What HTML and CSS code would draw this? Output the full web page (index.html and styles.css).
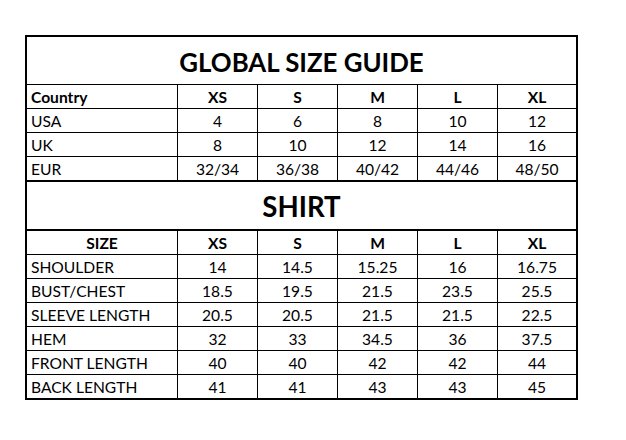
FILE: index.html
```html
<!DOCTYPE html>
<html lang="en">
<head>
<meta charset="utf-8">
<title>Global Size Guide</title>
<link rel="stylesheet" href="styles.css">
</head>
<body>
<table class="guide">
  <colgroup>
    <col class="c-label"><col class="c-size"><col class="c-size"><col class="c-size"><col class="c-size"><col class="c-last">
  </colgroup>
  <tr class="title-row"><th colspan="6" class="title">GLOBAL SIZE GUIDE</th></tr>
  <tr class="head-row"><th class="label">Country</th><th>XS</th><th>S</th><th>M</th><th>L</th><th>XL</th></tr>
  <tr><td class="label">USA</td><td>4</td><td>6</td><td>8</td><td>10</td><td>12</td></tr>
  <tr><td class="label">UK</td><td>8</td><td>10</td><td>12</td><td>14</td><td>16</td></tr>
  <tr class="section-end"><td class="label">EUR</td><td>32/34</td><td>36/38</td><td>40/42</td><td>44/46</td><td>48/50</td></tr>
  <tr class="title-row title-row--shirt"><th colspan="6" class="title title--shirt">SHIRT</th></tr>
  <tr class="head-row"><th class="label label--center">SIZE</th><th>XS</th><th>S</th><th>M</th><th>L</th><th>XL</th></tr>
  <tr><td class="label">SHOULDER</td><td>14</td><td>14.5</td><td>15.25</td><td>16</td><td>16.75</td></tr>
  <tr><td class="label">BUST/CHEST</td><td>18.5</td><td>19.5</td><td>21.5</td><td>23.5</td><td>25.5</td></tr>
  <tr><td class="label">SLEEVE LENGTH</td><td>20.5</td><td>20.5</td><td>21.5</td><td>21.5</td><td>22.5</td></tr>
  <tr><td class="label">HEM</td><td>32</td><td>33</td><td>34.5</td><td>36</td><td>37.5</td></tr>
  <tr><td class="label">FRONT LENGTH</td><td>40</td><td>40</td><td>42</td><td>42</td><td>44</td></tr>
  <tr class="last-row"><td class="label">BACK LENGTH</td><td>41</td><td>41</td><td>43</td><td>43</td><td>45</td></tr>
</table>
</body>
</html>
```

FILE: styles.css
```css
html, body {
  margin: 0;
  padding: 0;
  background: #ffffff;
}

body {
  padding: 35px 0 0 25px;
  font-family: "Lato", "Liberation Sans", sans-serif;
  color: #000000;
}

.guide {
  border-collapse: separate;
  border-spacing: 0;
  table-layout: fixed;
  width: 553px;
  border: 2px solid #000000;
}

.c-label { width: 151px; }
.c-size { width: 80px; }
.c-last { width: 78px; }

.guide th,
.guide td {
  box-sizing: border-box;
  padding: 0 0 1px 0;
  height: 24px;
  border-right: 1px solid #000000;
  border-bottom: 1px solid #000000;
  font-size: 15.6px;
  line-height: 20px;
  text-align: center;
  vertical-align: bottom;
  white-space: nowrap;
  overflow: hidden;
}

.guide th {
  font-weight: 700;
}

.guide td {
  font-weight: 400;
}

.guide tr > :last-child {
  border-right: none;
}

.guide .label {
  text-align: left;
  padding-left: 4px;
}

.guide .label--center {
  text-align: center;
  padding-left: 0;
}

.guide .title {
  height: 48px;
  font-size: 25.8px;
  line-height: 32px;
  vertical-align: middle;
  padding: 2px 0 0 0;
}

.guide .title--shirt {
  height: 49px;
  font-size: 27.6px;
  border-bottom-width: 2px;
}

.guide .section-end > * {
  height: 25px;
  border-bottom-width: 2px;
}

.guide .last-row > * {
  height: 23px;
  border-bottom: none;
}
```
